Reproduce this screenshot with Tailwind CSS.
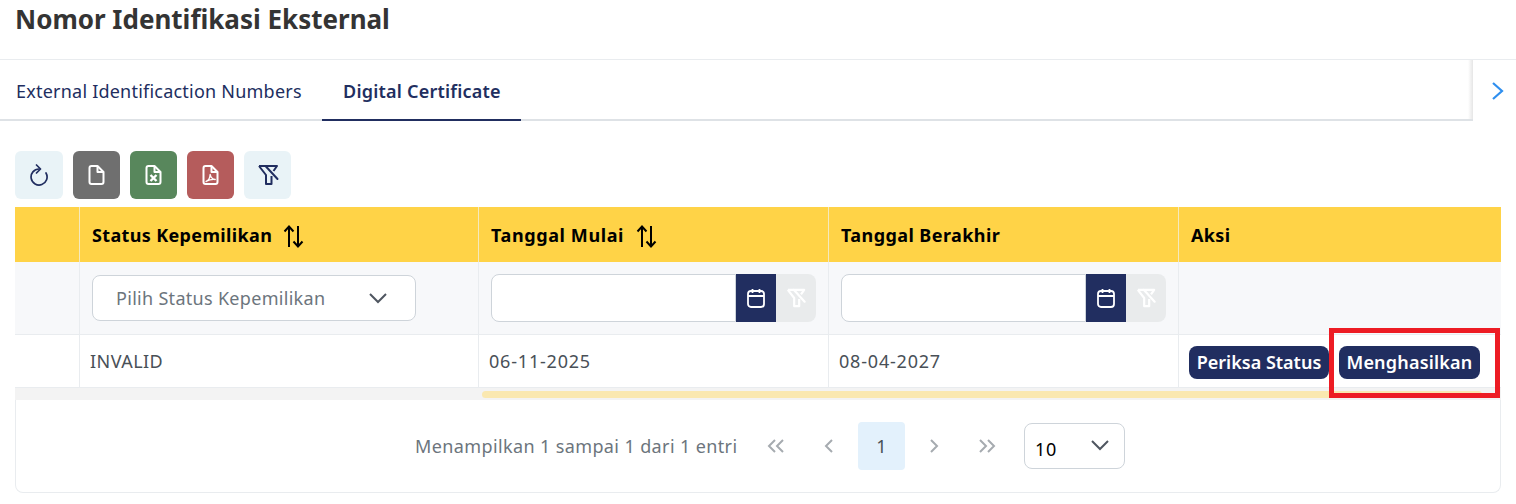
<!DOCTYPE html>
<html lang="en">
<head>
  <meta charset="UTF-8">
  <title>Nomor Identifikasi Eksternal</title>
  <script src="https://cdn.jsdelivr.net/npm/@tailwindcss/browser@4"></script>
</head>
<body class="bg-white font-['Noto_Sans',sans-serif] text-[#343a40] overflow-hidden">
<div class="relative w-[1516px] h-[504px] overflow-hidden">
  <!-- title -->
  <div class="h-[60px] border-b border-[#e9ecef] pl-[15px]">
    <h1 class="text-[26px] leading-[39px] font-bold text-[#343434]">Nomor Identifikasi Eksternal</h1>
  </div>

  <!-- tabs -->
  <div class="flex h-[61px]">
    <div class="flex w-[1473px] border-b-2 border-[#dee2e6] text-[18px] text-[#212e60] tracking-[0.22px]">
      <div class="pl-[16px] w-[306px] leading-[62px] whitespace-nowrap">External Identificaction Numbers</div>
      <div class="ml-[16px] w-[199px] pl-[21px] leading-[62px] font-semibold border-b-2 border-[#212e60] h-[61px] whitespace-nowrap">Digital Certificate</div>
      <div class="ml-auto w-[5px] bg-linear-to-r from-transparent to-black/10"></div>
    </div>
    <div class="flex-1 flex items-center justify-end pr-[11px] h-[61px]">
      <svg class="w-[14px] h-[20px]" viewBox="0 0 14 20" fill="none" stroke="#2f8fef" stroke-width="2.2"><path d="M2 2l9 8-9 8"/></svg>
    </div>
  </div>

  <!-- toolbar -->
  <div class="flex gap-[10px] pl-[15px] pt-[30px] h-[86px]">
    <button class="w-[48px] h-[48px] rounded-md bg-[#e9f3f7] flex items-center justify-center">
      <svg class="w-[20px] h-[22px]" viewBox="0 0 20 22" fill="none" stroke="#212e60" stroke-width="1.7" stroke-linecap="round" stroke-linejoin="round"><path d="M10 5A8 8 0 1 0 17 9"/><path d="M7.500 1l4 4-4 4"/></svg>
    </button>
    <button class="w-[47px] h-[48px] rounded-md bg-[#6f6f6f] flex items-center justify-center">
      <svg class="w-[17px] h-[20px]" viewBox="0 0 16 20" fill="none" stroke="#fff" stroke-width="2" stroke-linejoin="round"><path d="M3 1h6l6 6v10a2 2 0 0 1-2 2H3a2 2 0 0 1-2-2V3a2 2 0 0 1 2-2z"/><path d="M9 1v6h6"/></svg>
    </button>
    <button class="w-[47px] h-[48px] rounded-md bg-[#58875c] flex items-center justify-center">
      <svg class="w-[17px] h-[20px]" viewBox="0 0 16 20" fill="none" stroke="#fff" stroke-width="2" stroke-linejoin="round"><path d="M3 1h6l6 6v10a2 2 0 0 1-2 2H3a2 2 0 0 1-2-2V3a2 2 0 0 1 2-2z"/><path d="M9 1v6h6"/><path d="M5 10l6 6M11 10l-6 6" stroke-width="2.400"/></svg>
    </button>
    <button class="w-[47px] h-[48px] rounded-md bg-[#b55c5c] flex items-center justify-center">
      <svg class="w-[17px] h-[20px]" viewBox="0 0 16 20" fill="none" stroke="#fff" stroke-width="2" stroke-linejoin="round"><path d="M3 1h6l6 6v10a2 2 0 0 1-2 2H3a2 2 0 0 1-2-2V3a2 2 0 0 1 2-2z"/><path d="M9 1v6h6"/><path d="M3.500 16.500c2.500-1 4-4.500 4.200-7 .5 3 2 4.500 5 5-3-.3-6.500.5-9.200 2z" stroke-width="1.400"/></svg>
    </button>
    <button class="w-[47px] h-[48px] rounded-md bg-[#e9f3f7] flex items-center justify-center">
      <svg class="w-[22px] h-[22px]" viewBox="0 0 22 22" fill="none" stroke="#212e60" stroke-width="2" stroke-linejoin="round"><path d="M2 2H20L16.500 7M2 2L9 11V20H14.500V12"/><path d="M8.500 2L20.500 15" stroke-linecap="round"/></svg>
    </button>
  </div>

  <!-- table -->
  <div class="mx-[15px] w-[1486px]">
    <div class="grid grid-cols-[64px_399px_350px_350px_323px] h-[55px] bg-[#ffd347] text-[18px] tracking-[0.35px] font-bold text-black">
      <div></div>
      <div class="border-l border-[#f5e9bd] pl-[12px] pt-[2px] flex items-center gap-[10px]">Status Kepemilikan
        <svg class="w-[22px] h-[24px]" viewBox="0 0 22 24" fill="none" stroke="#000" stroke-width="2"><path d="M7 23V3M2.500 7.500L7 2.500l4.500 5M16 2v20M11.500 17.500l4.500 5 4.500-5"/></svg>
      </div>
      <div class="border-l border-[#f5e9bd] pl-[12px] pt-[2px] flex items-center gap-[11px] tracking-[0.6px]">Tanggal Mulai
        <svg class="w-[22px] h-[24px]" viewBox="0 0 22 24" fill="none" stroke="#000" stroke-width="2"><path d="M7 23V3M2.500 7.500L7 2.500l4.500 5M16 2v20M11.500 17.500l4.500 5 4.500-5"/></svg>
      </div>
      <div class="border-l border-[#f5e9bd] pl-[12px] pt-[2px] flex items-center tracking-[0.42px]">Tanggal Berakhir</div>
      <div class="border-l border-[#f5e9bd] pl-[12px] pt-[2px] flex items-center">Aksi</div>
    </div>

    <!-- filter row -->
    <div class="grid grid-cols-[64px_399px_350px_350px_323px] h-[73px] bg-[#f7f8fa] border-b border-[#e9ecef]">
      <div></div>
      <div class="border-l border-[#e9ecef] pl-[12px] pt-[13px]">
        <div class="w-[324px] h-[46px] bg-white border border-[#ced4da] rounded-lg flex items-center justify-between pl-[23px] pr-[27px] text-[18px] tracking-[0.3px] text-[#6c757d]">
          <span class="whitespace-nowrap">Pilih Status Kepemilikan</span>
          <svg class="w-[20px] h-[12px]" viewBox="0 0 20 12" fill="none" stroke="#4f5660" stroke-width="2"><path d="M2 2l8 8 8-8"/></svg>
        </div>
      </div>
      <div class="border-l border-[#e9ecef] pl-[12px] pt-[12px]">
        <div class="flex h-[48px] w-[325px]">
          <div class="w-[245px] bg-white border border-[#ced4da] rounded-l-lg"></div>
          <div class="w-[40px] bg-[#212e60] flex items-center justify-center">
            <svg class="w-[18px] h-[20px]" viewBox="0 0 18 20" fill="none" stroke="#fff" stroke-width="1.800"><rect x="1" y="3" width="16" height="16" rx="3"/><path d="M1 8h16M5.500 1v4M12.500 1v4"/></svg>
          </div>
          <div class="w-[40px] bg-[#e9ebec] rounded-r-lg flex items-center justify-center">
            <svg class="w-[20px] h-[20px]" viewBox="0 0 22 22" fill="none" stroke="#fff" stroke-width="2.400" stroke-linejoin="round"><path d="M2 2H20L16.500 7M2 2L9 11V20H14.500V12"/><path d="M8.500 2L20.500 15" stroke-linecap="round"/></svg>
          </div>
        </div>
      </div>
      <div class="border-l border-[#e9ecef] pl-[12px] pt-[12px]">
        <div class="flex h-[48px] w-[325px]">
          <div class="w-[245px] bg-white border border-[#ced4da] rounded-l-lg"></div>
          <div class="w-[40px] bg-[#212e60] flex items-center justify-center">
            <svg class="w-[18px] h-[20px]" viewBox="0 0 18 20" fill="none" stroke="#fff" stroke-width="1.800"><rect x="1" y="3" width="16" height="16" rx="3"/><path d="M1 8h16M5.500 1v4M12.500 1v4"/></svg>
          </div>
          <div class="w-[40px] bg-[#e9ebec] rounded-r-lg flex items-center justify-center">
            <svg class="w-[20px] h-[20px]" viewBox="0 0 22 22" fill="none" stroke="#fff" stroke-width="2.400" stroke-linejoin="round"><path d="M2 2H20L16.500 7M2 2L9 11V20H14.500V12"/><path d="M8.500 2L20.500 15" stroke-linecap="round"/></svg>
          </div>
        </div>
      </div>
      <div class="border-l border-[#e9ecef]"></div>
    </div>

    <!-- data row -->
    <div class="grid grid-cols-[64px_399px_350px_350px_323px] h-[53px] border-b border-[#e9ecef] text-[18px] text-[#495057]">
      <div></div>
      <div class="border-l border-[#e9ecef] pl-[10px] pt-[1px] flex items-center tracking-[0.45px]">INVALID</div>
      <div class="border-l border-[#e9ecef] pl-[10px] pt-[1px] flex items-center tracking-[0.8px]">06-11-2025</div>
      <div class="border-l border-[#e9ecef] pl-[10px] pt-[1px] flex items-center tracking-[0.8px]">08-04-2027</div>
      <div class="border-l border-[#e9ecef] pl-[10px] pt-[3px] flex items-center gap-[10px]">
        <span class="w-[140px] h-[33px] rounded-lg bg-[#212e60] text-white text-center font-semibold leading-[33px] whitespace-nowrap">Periksa Status</span>
        <span class="w-[141px] h-[33px] rounded-lg bg-[#212e60] text-white text-center font-semibold leading-[33px] whitespace-nowrap tracking-[0.2px]">Menghasilkan</span>
      </div>
    </div>

    <!-- horizontal scrollbar -->
    <div class="relative h-[12px] bg-[#f3f3f3]">
      <div class="absolute left-[467px] top-[3px] w-[1000px] h-[7px] rounded-full bg-[#fae8b0]"></div>
    </div>

    <!-- footer -->
    <div class="h-[93px] border border-t-0 border-[#e9ecef] rounded-b-lg flex items-center pl-[399px] text-[18px] text-[#6c757d]">
      <span class="w-[337px] pt-[1px] whitespace-nowrap tracking-[0.38px]">Menampilkan 1 sampai 1 dari 1 entri</span>
      <div class="flex items-center w-[259px]">
        <div class="w-[48px] h-[48px] flex items-center justify-center"><svg class="w-[18px] h-[14px]" viewBox="0 0 18 14" fill="none" stroke="#a6abb0" stroke-width="2"><path d="M8 1L2 7l6 6M16 1l-6 6 6 6"/></svg></div>
        <div class="w-[48px] h-[48px] ml-[5px] flex items-center justify-center"><svg class="w-[10px] h-[14px]" viewBox="0 0 10 14" fill="none" stroke="#a6abb0" stroke-width="2"><path d="M8 1L2 7l6 6"/></svg></div>
        <div class="w-[47px] h-[48px] ml-[5px] rounded bg-[#e3f1fc] flex items-center justify-center text-[#495057]">1</div>
        <div class="w-[48px] h-[48px] ml-[5px] flex items-center justify-center"><svg class="w-[10px] h-[14px]" viewBox="0 0 10 14" fill="none" stroke="#a6abb0" stroke-width="2"><path d="M2 1l6 6-6 6"/></svg></div>
        <div class="w-[48px] h-[48px] ml-[5px] flex items-center justify-center"><svg class="w-[18px] h-[14px]" viewBox="0 0 18 14" fill="none" stroke="#a6abb0" stroke-width="2"><path d="M2 1l6 6-6 6M10 1l6 6-6 6"/></svg></div>
      </div>
      <div class="w-[101px] h-[46px] ml-[13px] border border-[#ced4da] rounded-lg flex items-center justify-between pl-[10px] pr-[14px] text-black">
        <span class="text-[18px] mt-[7px] tracking-[0.8px]">10</span>
        <svg class="w-[20px] h-[12px] mb-[2px]" viewBox="0 0 20 12" fill="none" stroke="#4f5660" stroke-width="2"><path d="M2 2l8 8 8-8"/></svg>
      </div>
    </div>
  </div>

  <!-- annotation box -->
  <div class="absolute left-[1329px] top-[328px] w-[171px] h-[70px] border-[5px] border-[#ed1c24]"></div>
</div>
</body>
</html>
